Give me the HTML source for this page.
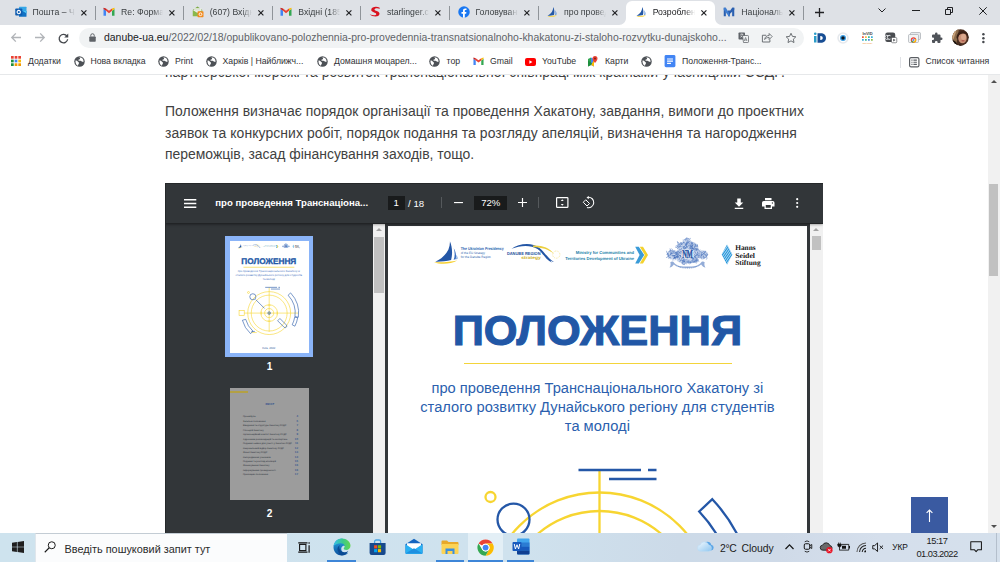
<!DOCTYPE html>
<html lang="uk">
<head>
<meta charset="utf-8">
<title>Розроблено положення</title>
<style>
*{box-sizing:border-box;margin:0;padding:0}
html,body{width:1000px;height:562px;overflow:hidden;background:#fff}
body{position:relative;font-family:"Liberation Sans","DejaVu Sans",sans-serif;color:#202124}
svg{position:absolute;overflow:visible}
/* ---------- tab strip ---------- */
#tabstrip{position:absolute;left:0;top:0;width:1000px;height:25px;background:#dee1e6}
.tab{position:absolute;top:0;height:25px;width:89px}
.tab .t{position:absolute;left:26.500px;top:6px;font-size:8.700px;line-height:12px;color:#3c4043;white-space:nowrap;width:43px;overflow:hidden;
  -webkit-mask-image:linear-gradient(90deg,#000 74%,transparent 98%);mask-image:linear-gradient(90deg,#000 74%,transparent 98%)}
.tab .x{left:74.600px;top:9.600px;width:5.800px;height:5.800px}
.tab .sep{position:absolute;left:88.500px;top:6px;width:1px;height:14px;background:#8f9499}
.tab.active{background:#fff;border-radius:6px 6px 0 0;top:.5px;height:24.500px}
.tab.active .t{top:5.500px;color:#202124}.tab.active .x{top:9.100px}
.fav{left:8.5px;top:6px;width:12px;height:12px}
.tab.active .fav{top:5.500px}
.wc{stroke:#202124;stroke-width:1;fill:none}
/* ---------- toolbar ---------- */
#toolbar{position:absolute;left:0;top:25px;width:1000px;height:25px;background:#fff}
#omni{position:absolute;left:79px;top:2.600px;width:724.500px;height:20.400px;border-radius:10.200px;background:#f1f3f4}
#url{position:absolute;left:25px;top:3.900px;font-size:10.450px;line-height:14px;color:#5f6368;white-space:nowrap}
#url b{font-weight:normal;color:#202124}
/* ---------- bookmarks ---------- */
#bookmarks{position:absolute;left:0;top:50px;width:1000px;height:24.600px;background:#fff;border-bottom:1px solid #e6e8ea}
.bm{position:absolute;top:5px;font-size:8.7px;line-height:12px;color:#303134;white-space:nowrap}
.gl{top:5.800px;width:11px;height:11px}
/* ---------- page ---------- */
#page{position:absolute;left:0;top:75px;width:988px;height:458px;background:#fff;overflow:hidden}
.ptxt{position:absolute;left:165px;font-size:13.950px;line-height:21.500px;color:#414141;white-space:nowrap;letter-spacing:.042px}
#vscroll{position:absolute;left:987.700px;top:75px;width:12.300px;height:458px;background:#f1f1f1}
#vscroll .th{position:absolute;left:1.800px;top:109px;width:9px;height:92px;background:#c1c1c1}
.arr{position:absolute;width:0;height:0;border-left:3px solid transparent;border-right:3px solid transparent}
.arr.up{border-bottom:3px solid #505050}.arr.dn{border-top:3px solid #505050}
/* ---------- pdf ---------- */
#pdf{position:absolute;left:165.300px;top:107.800px;width:657.500px;height:360px;background:#323639;overflow:hidden}
#pdfbar{position:absolute;left:0;top:0;width:658px;height:40.700px;background:#323639;box-shadow:0 1px 3px rgba(0,0,0,.55);z-index:3}
#pdfbar .ttl{position:absolute;left:50px;top:14.700px;font-size:9.62px;font-weight:bold;color:#fff;line-height:12px;white-space:nowrap}
#pdfbar .box{position:absolute;background:#191b1c;color:#fff;font-size:9.600px;line-height:14.600px;text-align:center;height:14px;top:13.500px}
#pdfbar .txt{position:absolute;color:#fff;font-size:9.600px;line-height:14px;top:13.900px;white-space:nowrap}
#pdfbar .vsep{position:absolute;top:14.500px;width:1px;height:11px;background:#55595c}
#side{position:absolute;left:0;top:41px;width:208px;height:320px;background:#323639}
#side .lbl{position:absolute;width:20px;text-align:center;color:#fff;font-size:10.200px;line-height:12px;font-weight:bold}
#sidescroll{position:absolute;left:207.400px;top:41px;width:12.300px;height:320px;background:#f1f1f1}
#sidescroll .th{position:absolute;left:1.500px;top:12.900px;width:9.400px;height:56px;background:#c1c1c1}
#viewer{position:absolute;left:219.600px;top:41px;width:425.400px;height:320px;background:#33373a}
#sheet{position:absolute;left:3px;top:2.200px;width:419.500px;height:330px;background:#fff;overflow:hidden}
#pdfscroll{position:absolute;left:644.900px;top:41px;width:12.600px;height:320px;background:#f1f1f1}
#pdfscroll .th{position:absolute;left:1.800px;top:12.400px;width:9.200px;height:13.600px;background:#c1c1c1}
#ttl{position:absolute;left:0;width:419px;text-align:center;top:78.600px;font-size:43.400px;line-height:50px;font-weight:bold;color:#2157a6;white-space:nowrap;-webkit-text-stroke:1.100px #2157a6}
.sub{position:absolute;left:0;width:419px;text-align:center;font-size:14.680px;line-height:20px;color:#2b5fae;white-space:nowrap}
#totop{position:absolute;left:911.200px;top:422.400px;width:36.600px;height:36px;background:#3a5aa1;color:#fff}
/* ---------- taskbar ---------- */
#taskbar{position:absolute;left:0;top:533px;width:1000px;height:29px;background:linear-gradient(90deg,#cee3ee 0%,#cfe2ee 52%,#ccdae8 68%,#cfdae8 78%,#d5dfec 88%,#d5e0ec 100%)}
#tbin{position:absolute;left:0;top:1px;width:1000px;height:28px}
#search{position:absolute;left:34.500px;top:-1px;width:252px;height:29px;background:#fbfcfd;border-top:1px solid #c3ccd4;border-left:1px solid #dfe6ec}
#search span{position:absolute;left:29px;top:8.500px;font-size:10.9px;line-height:13px;color:#2b2b2b;white-space:nowrap}
.tray{position:absolute;font-size:9.2px;color:#1b1b1b;white-space:nowrap;line-height:12px}
</style>
</head>
<body>
<!-- TABSTRIP -->
<div id="tabstrip">
<div class="tab" style="left:6.0px"><svg class="fav" viewBox="0 0 24 24"><rect x="8" y="1.500" width="15" height="12" rx="1" fill="#35a7e8"/><path d="M8 10h15v10.500a1 1 0 0 1-1 1H8z" fill="#1272c4"/><path d="M15.500 10h7.500v5z" fill="#50c4f4"/><rect x="0.500" y="5" width="14" height="14" rx="1.500" fill="#0f5cb0"/><circle cx="7.500" cy="12" r="3.300" fill="none" stroke="#fff" stroke-width="2.100"/></svg><div class="t">Пошта – Чер</div><svg class="x" viewBox="0 0 6 6"><path d="M.4.400l5.200 5.200M5.600.400L.4 5.600" stroke="#202124" stroke-width="1.200" fill="none"/></svg><div class="sep"></div></div>
<div class="tab" style="left:94.6px"><svg class="fav" viewBox="0 0 24 24"><path d="M1 19.500V6l5 3.700v9.800z" fill="#4285f4"/><path d="M18 19.500V9.700L23 6v13.500z" fill="#34a853"/><path d="M18 4.800L23 3.500V6l-5 3.700z" fill="#fbbc04"/><path d="M1 3.500l5 1.300v4.900L1 6z" fill="#c5221f"/><path d="M6 4.800l6 4.600 6-4.600v4.900l-6 4.600-6-4.600z" fill="#ea4335"/></svg><div class="t">Re: Формат</div><svg class="x" viewBox="0 0 6 6"><path d="M.4.400l5.200 5.200M5.600.400L.4 5.600" stroke="#202124" stroke-width="1.200" fill="none"/></svg><div class="sep"></div></div>
<div class="tab" style="left:183.2px"><svg class="fav" viewBox="0 0 24 24"><path d="M1.500 8L11 1l9.500 7z" fill="#7aa843"/><rect x="4.500" y="4.500" width="14" height="9" fill="#f4f6f0"/><path d="M6 7h11M6 9.500h11" stroke="#c9cfc0" stroke-width="1"/><path d="M1.500 8l9.500 6 9.500-6v12.500h-19z" fill="#8bb84c"/><rect x="11" y="10.500" width="12" height="12" rx="1.500" fill="#f28a1e"/><circle cx="17" cy="16.500" r="2.800" fill="none" stroke="#fff" stroke-width="1.800"/></svg><div class="t">(607) Вхідні</div><svg class="x" viewBox="0 0 6 6"><path d="M.4.400l5.200 5.200M5.600.400L.4 5.600" stroke="#202124" stroke-width="1.200" fill="none"/></svg><div class="sep"></div></div>
<div class="tab" style="left:271.8px"><svg class="fav" viewBox="0 0 24 24"><path d="M1 19.500V6l5 3.700v9.800z" fill="#4285f4"/><path d="M18 19.500V9.700L23 6v13.500z" fill="#34a853"/><path d="M18 4.800L23 3.500V6l-5 3.700z" fill="#fbbc04"/><path d="M1 3.500l5 1.300v4.900L1 6z" fill="#c5221f"/><path d="M6 4.800l6 4.600 6-4.600v4.900l-6 4.600-6-4.600z" fill="#ea4335"/></svg><div class="t">Вхідні (185)</div><svg class="x" viewBox="0 0 6 6"><path d="M.4.400l5.200 5.200M5.600.400L.4 5.600" stroke="#202124" stroke-width="1.200" fill="none"/></svg><div class="sep"></div></div>
<div class="tab" style="left:360.4px"><svg class="fav" viewBox="0 0 24 24"><path d="M21.500 3.500C16 0.500 5 1 4.500 7.500 4 13 15 12.500 14.500 16.500 14 19.500 7 19 1.500 16.500c5 5.500 18.500 6.500 19.500-.5C22 9.500 10.500 10.500 11 7 11.500 4 17.500 3.500 21.500 5.500z" fill="#d9121f"/></svg><div class="t">starlinger.co</div><svg class="x" viewBox="0 0 6 6"><path d="M.4.400l5.200 5.200M5.600.400L.4 5.600" stroke="#202124" stroke-width="1.200" fill="none"/></svg><div class="sep"></div></div>
<div class="tab" style="left:449.0px"><svg class="fav" viewBox="0 0 24 24"><circle cx="12" cy="12" r="11.500" fill="#1877f2"/><path d="M16.300 15.300l.5-3.300h-3.200V9.800c0-.9.400-1.800 1.900-1.800H17V5.200s-1.300-.2-2.600-.2c-2.700 0-4.400 1.600-4.400 4.500V12H7v3.300h3v8.100c1.200.2 2.400.2 3.600 0v-8.100z" fill="#fff"/></svg><div class="t">Головуванн</div><svg class="x" viewBox="0 0 6 6"><path d="M.4.400l5.200 5.200M5.600.400L.4 5.600" stroke="#202124" stroke-width="1.200" fill="none"/></svg><div class="sep"></div></div>
<div class="tab" style="left:537.6px"><svg class="fav" viewBox="0 0 24 24"><path d="M14.500 2C14.500 9 11 15.500 3 19.500c5.500 0 10-.5 13-1.500C17.500 12 16.800 6.500 14.500 2z" fill="#2458a6"/><path d="M18 8.500c1.400 3.500 1.400 7 .2 9.800l2.600-.7C21.500 14.300 20.300 11 18 8.500z" fill="#4a86d6"/><path d="M2.500 20c6 2.600 14 2.400 19.500-1.300-6 1.400-13 1.800-19.500 1.300z" fill="#f6cf2f"/></svg><div class="t">про провед</div><svg class="x" viewBox="0 0 6 6"><path d="M.4.400l5.200 5.200M5.600.400L.4 5.600" stroke="#202124" stroke-width="1.200" fill="none"/></svg></div>
<div class="tab active" style="left:626.2px"><svg class="fav" viewBox="0 0 24 24"><path d="M14.500 2C14.500 9 11 15.500 3 19.500c5.500 0 10-.5 13-1.500C17.500 12 16.800 6.500 14.500 2z" fill="#2458a6"/><path d="M18 8.500c1.400 3.500 1.400 7 .2 9.800l2.600-.7C21.500 14.300 20.300 11 18 8.500z" fill="#4a86d6"/><path d="M2.500 20c6 2.600 14 2.400 19.500-1.300-6 1.400-13 1.800-19.500 1.300z" fill="#f6cf2f"/></svg><div class="t">Розроблено</div><svg class="x" viewBox="0 0 6 6"><path d="M.4.400l5.200 5.200M5.600.400L.4 5.600" stroke="#202124" stroke-width="1.200" fill="none"/></svg></div>
<div class="tab" style="left:714.8px"><svg class="fav" viewBox="0 0 24 24"><path d="M1.500 3.500h4.200v17H1.500zM10 9h4v11.500h-4zM18.300 3.500h4.200v17h-4.200z" fill="#2a5fb0"/><path d="M1.500 3.500h4.200L14 17v3.500h-2.500L1.500 7.500z" fill="#3f7dd0"/><path d="M22.500 3.500h-4.200L12 12.500v5l10.500-10z" fill="#2a5fb0"/></svg><div class="t">Національн</div><svg class="x" viewBox="0 0 6 6"><path d="M.4.400l5.200 5.200M5.600.400L.4 5.600" stroke="#202124" stroke-width="1.200" fill="none"/></svg><div class="sep"></div></div>
<svg style="left:619.200px;top:18px;width:7px;height:7px" viewBox="0 0 6 6"><path d="M0 6h6V0C6 3.300 3.300 6 0 6z" fill="#fff"/></svg>
<svg style="left:715.200px;top:18px;width:7px;height:7px" viewBox="0 0 6 6"><path d="M6 6H0V0c0 3.300 2.700 6 6 6z" fill="#fff"/></svg>
<svg style="left:814.500px;top:7.500px;width:9px;height:9px" viewBox="0 0 9 9"><path d="M4.500 0v9M0 4.500h9" stroke="#202124" stroke-width="1.300" fill="none"/></svg>
<svg style="left:878px;top:8px;width:8px;height:5px" viewBox="0 0 8 5"><path class="wc" d="M.5.500L4 4l3.500-3.500"/></svg>
<svg style="left:912px;top:10px;width:8px;height:1px" viewBox="0 0 8 1"><path class="wc" d="M0 .5h8"/></svg>
<svg style="left:945px;top:6.500px;width:8px;height:8px" viewBox="0 0 8 8"><path class="wc" d="M.5 2.500h5v5h-5zM2.500 2.500v-2h5v5h-2"/></svg>
<svg style="left:979px;top:6.500px;width:8px;height:8px" viewBox="0 0 8 8"><path class="wc" d="M.3.300l7.400 7.400M7.700.300L.3 7.700"/></svg>
</div>

<!-- TOOLBAR -->
<div id="toolbar">
<svg style="left:11px;top:8px;width:10px;height:9px" viewBox="0 0 10 9"><path d="M10 4.500H1M4.800.400L.8 4.500l4 4.100" stroke="#b1b4b8" stroke-width="1.350" fill="none"/></svg>
<svg style="left:34.500px;top:8px;width:10px;height:9px" viewBox="0 0 10 9"><path d="M0 4.500h9M5.200.400l4 4.100-4 4.100" stroke="#b1b4b8" stroke-width="1.350" fill="none"/></svg>
<svg style="left:57.500px;top:7.500px;width:11px;height:11px" viewBox="0 0 22 22"><path d="M18 6.500A8.500 8.500 0 1 0 19.300 12.500" stroke="#46494e" stroke-width="2.600" fill="none"/><path d="M20.500 1v8h-8z" fill="#46494e"/></svg>
<div id="omni">
<svg style="left:9.800px;top:5.300px;width:7px;height:9px" viewBox="0 0 14 18"><rect x="0.500" y="7" width="13" height="10.500" rx="1.500" fill="#5f6368"/><path d="M3.500 7V5a3.500 3.500 0 0 1 7 0v2" fill="none" stroke="#5f6368" stroke-width="2"/></svg>
<div id="url"><b>danube-ua.eu</b>/2022/02/18/opublikovano-polozhennia-pro-provedennia-transnatsionalnoho-khakatonu-zi-staloho-rozvytku-dunajskoho...</div>
<!-- translate -->
<svg style="left:659px;top:4.900px;width:11px;height:11px" viewBox="0 0 22 22"><rect x="1" y="1" width="13" height="14" rx="1.500" fill="#5f6368"/><path d="M4.500 4.500h6M7.500 3v1.500M9.500 4.500c-.5 3-2.500 5-5 6M5.500 7c1 1.500 2.500 3 4.500 3.500" stroke="#fff" stroke-width="1.200" fill="none"/><path d="M9 7h10.500a1.500 1.500 0 0 1 1.500 1.500V19.500a1.500 1.500 0 0 1-1.500 1.500H11z" fill="#f1f3f4" stroke="#5f6368" stroke-width="1.500"/><path d="M12.500 18l2.700-7 2.700 7M13.500 16h3.500" stroke="#5f6368" stroke-width="1.300" fill="none"/></svg>
<!-- share -->
<svg style="left:682px;top:4.700px;width:11.800px;height:11px" viewBox="0 0 23 22"><path d="M10 6.500H2.500V20h15v-5" stroke="#5f6368" stroke-width="1.800" fill="none"/><path d="M7 15c.5-5 4-8 9-8V3l6 6-6 6v-4c-4 0-7 1-9 4z" stroke="#5f6368" stroke-width="1.700" fill="none" stroke-linejoin="round"/></svg>
<!-- star -->
<svg style="left:705.500px;top:4.200px;width:12px;height:12px" viewBox="0 0 24 24"><path d="M12 2.500l2.900 6.300 6.800.8-5 4.700 1.300 6.800-6-3.400-6 3.400 1.300-6.800-5-4.700 6.800-.8z" stroke="#5f6368" stroke-width="1.800" fill="none" stroke-linejoin="round"/></svg>
</div>
<!-- extension icons -->
<svg style="left:813.500px;top:7px;width:12px;height:11px" viewBox="0 0 24 22"><rect x="0" y="8" width="5" height="13" fill="#2a9cc8"/><circle cx="2.500" cy="3.500" r="2.600" fill="#2a9cc8"/><path d="M7 2.500h6.500c6.500 0 10.500 3.800 10.500 9.500s-4 9.500-10.500 9.500H7zM12.500 8v8h.8c2.600 0 4.200-1.400 4.200-4s-1.600-4-4.200-4z" fill="#184e94"/></svg>
<svg style="left:836.500px;top:6.500px;width:12px;height:12px" viewBox="0 0 24 24"><circle cx="12" cy="12" r="11.500" fill="#e6e9ed"/><circle cx="12" cy="12" r="8.300" fill="#fff"/><circle cx="12" cy="12" r="6" fill="#3a9fe6"/><circle cx="12" cy="12" r="3.500" fill="#10161f"/></svg>
<svg style="left:860.500px;top:6px;width:13px;height:13px" viewBox="0 0 26 26"><text x="13" y="7.500" font-size="8" font-weight="bold" text-anchor="middle" fill="#444" font-family="Liberation Sans, sans-serif">InVID</text><rect x="2" y="10.5" width="3.500" height="3.500" fill="#e9573f"/><rect x="8" y="10.5" width="3.500" height="3.500" fill="#f6bb42"/><rect x="14" y="10.5" width="3.500" height="3.500" fill="#37bc9b"/><rect x="20" y="10.5" width="3.500" height="3.500" fill="#3bafda"/><rect x="2" y="16.0" width="3.500" height="3.500" fill="#3bafda"/><rect x="8" y="16.0" width="3.500" height="3.500" fill="#37bc9b"/><rect x="14" y="16.0" width="3.500" height="3.500" fill="#4a89dc"/><rect x="20" y="16.0" width="3.500" height="3.500" fill="#8cc152"/><text x="13" y="25.500" font-size="5" text-anchor="middle" fill="#f08a24" font-family="Liberation Sans, sans-serif">WeVerify</text></svg>
<svg style="left:884.500px;top:7px;width:12px;height:11px" viewBox="0 0 24 22"><rect x="0.500" y="1" width="20" height="19" rx="4.500" fill="#4a4d51"/><path d="M6 7.500a4 4 0 1 0 0 6.500M11 7.500a4 4 0 1 0 0 6.500" stroke="#e8eaed" stroke-width="2" fill="none"/><rect x="13" y="11" width="10.500" height="10.500" rx="2" fill="#fff" stroke="#4a4d51" stroke-width="1.200"/><path d="M16.500 13.500l4.500 2.700-4.500 2.700z" fill="#4a4d51"/></svg>
<svg style="left:907.500px;top:6.500px;width:13px;height:12px" viewBox="0 0 26 24"><rect x="5" y="1" width="20" height="14" rx="2" fill="#e8eaed" stroke="#9aa0a6" stroke-width="1.200"/><rect x="1" y="5" width="20" height="16" rx="2" fill="#f1f3f4" stroke="#9aa0a6" stroke-width="1.200"/><circle cx="11" cy="16" r="5.500" fill="#ea4335"/><path d="M11 16l-4.800 2.700A5.500 5.500 0 0 0 11 21.500z" fill="#34a853"/><path d="M11 16v5.500a5.500 5.500 0 0 0 4.800-8.200z" fill="#fbbc04"/><circle cx="11" cy="16" r="2.400" fill="#4285f4" stroke="#fff" stroke-width="1"/></svg>
<svg style="left:931px;top:7px;width:12px;height:12px" viewBox="0 0 24 24"><path d="M20.500 11H19V7a2 2 0 0 0-2-2h-4V3.500a2.500 2.500 0 0 0-5 0V5H4a2 2 0 0 0-2 2v3.800h1.500a2.700 2.700 0 0 1 0 5.400H2V20a2 2 0 0 0 2 2h3.800v-1.500a2.700 2.700 0 0 1 5.400 0V22H17a2 2 0 0 0 2-2v-4h1.500a2.500 2.500 0 0 0 0-5z" fill="#50545a"/></svg>
<!-- avatar -->
<svg style="left:951.500px;top:4px;width:17px;height:17px" viewBox="0 0 34 34"><defs><clipPath id="avc"><circle cx="17" cy="17" r="16.500"/></clipPath></defs><g clip-path="url(#avc)"><rect width="34" height="34" fill="#4a2e20"/><path d="M0 0h14L8 34H0z" fill="#8a6a4a"/><path d="M0 0h10L3 20H0z" fill="#c9a27a"/><ellipse cx="21" cy="18" rx="8.500" ry="10.500" fill="#c98f74"/><ellipse cx="23" cy="16" rx="5" ry="6" fill="#dba98e"/><path d="M9 18C9 6 20 1 30 7c3 3 4 8 3 13-1-7-5-11-11-11-6 0-10 4-11 12z" fill="#3a2116"/><ellipse cx="22" cy="23.500" rx="3.300" ry="1.500" fill="#b0584f"/><path d="M0 22c5 0 9 4 12 12H0z" fill="#17120f"/><path d="M14 30c4 3 12 3 16-1v5H14z" fill="#2a1b14"/></g></svg>
<svg style="left:982.400px;top:8.200px;width:2.800px;height:10.400px" viewBox="0 0 5.600 20.800"><circle cx="2.800" cy="2.600" r="2.500" fill="#46494e"/><circle cx="2.800" cy="10.400" r="2.500" fill="#46494e"/><circle cx="2.800" cy="18.200" r="2.500" fill="#46494e"/></svg>
</div>

<!-- BOOKMARKS -->
<div id="bookmarks">
<svg style="left:10.900px;top:6px;width:10px;height:10px" viewBox="0 0 20 20"><rect x="0.0" y="0.0" width="5.400" height="5.400" fill="#e94235"/><rect x="7.3" y="0.0" width="5.400" height="5.400" fill="#e94235"/><rect x="14.6" y="0.0" width="5.400" height="5.400" fill="#e94235"/><rect x="0.0" y="7.3" width="5.400" height="5.400" fill="#1e8e3e"/><rect x="7.3" y="7.3" width="5.400" height="5.400" fill="#4285f4"/><rect x="14.6" y="7.3" width="5.400" height="5.400" fill="#fbbc04"/><rect x="0.0" y="14.6" width="5.400" height="5.400" fill="#1e8e3e"/><rect x="7.3" y="14.6" width="5.400" height="5.400" fill="#f29900"/><rect x="14.6" y="14.6" width="5.400" height="5.400" fill="#f29900"/></svg>
<div class="bm" style="left:28px">Додатки</div>
<svg class="gl" style="left:73.5px" viewBox="0 0 22 22"><circle cx="11" cy="11" r="10.500" fill="#4d5156"/><path d="M3 9c2-.5 3.500.5 4.500 2s2.500 1.500 2.500 3-1.500 2-1.500 4l-1 1.500C4.500 18 2.500 14 3 9zM9.500 2.500c2 .5 3 1.500 2.500 3s-2.500 1-3 2.500 1.500 2 3 1.500 2.500.5 3.500 1.500 2.500 0 3.500 1c.5-3.500-1-7-4-8.500-1.500-.8-3.500-1.200-5.500-1z" fill="#fff"/></svg>
<div class="bm" style="left:90.5px">Нова вкладка</div>
<svg class="gl" style="left:158px" viewBox="0 0 22 22"><circle cx="11" cy="11" r="10.500" fill="#4d5156"/><path d="M3 9c2-.5 3.500.5 4.500 2s2.500 1.500 2.500 3-1.500 2-1.500 4l-1 1.500C4.500 18 2.500 14 3 9zM9.500 2.500c2 .5 3 1.500 2.500 3s-2.500 1-3 2.500 1.500 2 3 1.500 2.500.5 3.500 1.500 2.500 0 3.500 1c.5-3.500-1-7-4-8.500-1.500-.8-3.500-1.200-5.500-1z" fill="#fff"/></svg>
<div class="bm" style="left:175px">Print</div>
<svg class="gl" style="left:205.5px" viewBox="0 0 22 22"><circle cx="11" cy="11" r="10.500" fill="#4d5156"/><path d="M3 9c2-.5 3.500.5 4.500 2s2.500 1.500 2.500 3-1.500 2-1.500 4l-1 1.500C4.500 18 2.500 14 3 9zM9.500 2.500c2 .5 3 1.500 2.500 3s-2.500 1-3 2.500 1.500 2 3 1.500 2.500.5 3.500 1.500 2.500 0 3.500 1c.5-3.500-1-7-4-8.500-1.500-.8-3.500-1.200-5.500-1z" fill="#fff"/></svg>
<div class="bm" style="left:222.5px">Харків | Найближч...</div>
<svg class="gl" style="left:316.5px" viewBox="0 0 22 22"><circle cx="11" cy="11" r="10.500" fill="#4d5156"/><path d="M3 9c2-.5 3.500.5 4.500 2s2.500 1.500 2.500 3-1.500 2-1.500 4l-1 1.500C4.500 18 2.500 14 3 9zM9.500 2.500c2 .5 3 1.500 2.500 3s-2.500 1-3 2.500 1.500 2 3 1.500 2.500.5 3.500 1.500 2.500 0 3.500 1c.5-3.500-1-7-4-8.500-1.500-.8-3.500-1.200-5.500-1z" fill="#fff"/></svg>
<div class="bm" style="left:334px">Домашня моцарел...</div>
<svg class="gl" style="left:428.5px" viewBox="0 0 22 22"><circle cx="11" cy="11" r="10.500" fill="#4d5156"/><path d="M3 9c2-.5 3.500.5 4.500 2s2.500 1.500 2.500 3-1.500 2-1.500 4l-1 1.500C4.500 18 2.500 14 3 9zM9.500 2.500c2 .5 3 1.500 2.500 3s-2.500 1-3 2.500 1.500 2 3 1.500 2.500.5 3.500 1.500 2.500 0 3.500 1c.5-3.500-1-7-4-8.500-1.500-.8-3.500-1.200-5.500-1z" fill="#fff"/></svg>
<div class="bm" style="left:446.5px">тор</div>
<svg class="gl" style="left:472.500px" viewBox="0 0 24 24"><path d="M1 19.500V6l5 3.700v9.800z" fill="#4285f4"/><path d="M18 19.500V9.700L23 6v13.500z" fill="#34a853"/><path d="M18 4.800L23 3.500V6l-5 3.700z" fill="#fbbc04"/><path d="M1 3.500l5 1.300v4.900L1 6z" fill="#c5221f"/><path d="M6 4.800l6 4.600 6-4.600v4.900l-6 4.600-6-4.600z" fill="#ea4335"/></svg>
<div class="bm" style="left:490px">Gmail</div>
<svg style="left:524.500px;top:8px;width:11px;height:8px" viewBox="0 0 22 16"><rect width="22" height="16" rx="4" fill="#f00"/><path d="M8.800 4.500l6 3.500-6 3.500z" fill="#fff"/></svg>
<div class="bm" style="left:542px">YouTube</div>
<svg style="left:587px;top:5.500px;width:11px;height:12px" viewBox="0 0 22 24"><path d="M2 6l6-3v15l-6 3z" fill="#34a853"/><path d="M8 3l6 3v15l-6-3z" fill="#4285f4"/><path d="M8 18l6-10v13z" fill="#fbbc04"/><path d="M2 21l6-3 2-3.500L2 9z" fill="#1e8e3e"/><path d="M16 0a5 5 0 0 0-5 5c0 3.500 5 9 5 9s5-5.500 5-9a5 5 0 0 0-5-5z" fill="#ea4335"/><circle cx="16" cy="5" r="1.800" fill="#7b1a12"/></svg>
<div class="bm" style="left:605px">Карти</div>
<svg class="gl" style="left:640.5px" viewBox="0 0 22 22"><circle cx="11" cy="11" r="10.500" fill="#4d5156"/><path d="M3 9c2-.5 3.500.5 4.500 2s2.500 1.500 2.500 3-1.500 2-1.500 4l-1 1.500C4.500 18 2.500 14 3 9zM9.500 2.500c2 .5 3 1.500 2.500 3s-2.500 1-3 2.500 1.500 2 3 1.500 2.500.5 3.500 1.500 2.500 0 3.500 1c.5-3.500-1-7-4-8.500-1.500-.8-3.500-1.200-5.500-1z" fill="#fff"/></svg>
<svg style="left:663.700px;top:5.300px;width:12px;height:12.300px" viewBox="0 0 22 25"><rect width="22" height="25" rx="3" fill="#4285f4"/><path d="M5 8h12M5 12.500h12M5 17h8" stroke="#fff" stroke-width="2.200"/></svg>
<div class="bm" style="left:682px">Положення-Транс...</div>
<div style="position:absolute;left:900px;top:6.500px;width:1px;height:11px;background:#dfe1e5"></div>
<svg style="left:909px;top:6.500px;width:10.500px;height:10.500px" viewBox="0 0 21 21"><rect x="1.200" y="1.200" width="18.600" height="18.600" rx="3" fill="none" stroke="#5a5e63" stroke-width="2.400"/><path d="M8.800 6.300h7M8.800 10.500h7M8.800 14.700h7" stroke="#5a5e63" stroke-width="2.200"/><path d="M4.800 6.300h2.200M4.800 10.500h2.200M4.800 14.700h2.200" stroke="#5a5e63" stroke-width="2.200"/></svg>
<div class="bm" style="left:925.5px">Список читання</div>
</div>

<!-- PAGE -->
<div id="page">
<div class="ptxt" style="top:-12.800px;letter-spacing:.07px">партнерської мережі та розвиток транснаціональної співпраці між країнами-учасницями ЄСДР.</div>
<div class="ptxt" style="top:26.200px">Положення визначає порядок організації та проведення Хакатону, завдання, вимоги до проектних</div>
<div class="ptxt" style="top:47.700px;letter-spacing:.075px">заявок та конкурсних робіт, порядок подання та розгляду апеляцій, визначення та нагородження</div>
<div class="ptxt" style="top:69.200px;letter-spacing:-.008px">переможців, засад фінансування заходів, тощо.</div>
<div id="pdf">
<div style="position:absolute;left:0;top:0;width:658px;height:1px;background:#25282a;z-index:5"></div><div style="position:absolute;left:0;top:0;width:1px;height:360px;background:#25282a;z-index:5"></div>
<div id="pdfbar">
<svg style="left:19.200px;top:16px;width:12.300px;height:9px" viewBox="0 0 12.500 9"><path d="M0 .8h12.500M0 4.500h12.500M0 8.200h12.500" stroke="#fff" stroke-width="1.500"/></svg>
<div class="ttl">про проведення Транснаціона...</div>
<div class="box" style="left:222.300px;width:17.300px">1</div>
<div class="txt" style="left:242.800px">/ 18</div>
<div class="vsep" style="left:276px"></div>
<svg style="left:288.300px;top:19.700px;width:9px;height:1.150px" viewBox="0 0 9 1.150"><rect width="9" height="1.150" fill="#fff"/></svg>
<div class="box" style="left:309px;width:33px">72%</div>
<svg style="left:353px;top:15.500px;width:9px;height:9px" viewBox="0 0 9 9"><path d="M4.500 0v9M0 4.500h9" stroke="#fff" stroke-width="1.150"/></svg>
<div class="vsep" style="left:373px"></div>
<svg style="left:390.500px;top:14.500px;width:12.500px;height:11px" viewBox="0 0 25 22"><rect x="1.200" y="1.200" width="22.600" height="19.600" rx="1.500" fill="none" stroke="#fff" stroke-width="2.400"/><path d="M12.500 4.500l3 3.500h-6zM12.500 17.500l3-3.500h-6z" fill="#fff"/></svg>
<svg style="left:416px;top:13.500px;width:13px;height:13px" viewBox="0 0 26 26"><path d="M9.500 7.500l7.500 7.500-5 5-7.500-7.500z" fill="none" stroke="#fff" stroke-width="2"/><path d="M14 2.500a10.500 10.500 0 1 1-2 20.500" fill="none" stroke="#fff" stroke-width="2.200"/><path d="M15.500 0v6.500L11 3z" fill="#fff"/></svg>
<svg style="left:569px;top:15px;width:10px;height:11px" viewBox="0 0 20 22"><path d="M6.500 1h7v8h5L10 17.500 1.500 9h5z" fill="#fff"/><rect x="1.500" y="19.500" width="17" height="2.500" fill="#fff"/></svg>
<svg style="left:597px;top:15px;width:12.500px;height:11px" viewBox="0 0 25 22"><rect x="6" y="0" width="13" height="4.500" fill="#fff"/><path d="M3.500 6h18A3.500 3.500 0 0 1 25 9.500V17h-5v5H5v-5H0V9.500A3.500 3.500 0 0 1 3.500 6zM7.500 14v5.500h10V14z" fill="#fff" fill-rule="evenodd"/><circle cx="20.800" cy="10" r="1.300" fill="#323639"/></svg>
<svg style="left:631px;top:15.500px;width:2.400px;height:10px" viewBox="0 0 4.800 20"><circle cx="2.400" cy="2.400" r="2.200" fill="#fff"/><circle cx="2.400" cy="10" r="2.200" fill="#fff"/><circle cx="2.400" cy="17.600" r="2.200" fill="#fff"/></svg>
</div>
<div id="side">
<div style="position:absolute;left:60px;top:12.300px;width:87.800px;height:120.700px;background:#8ab4f8"></div>
<div id="th1" style="position:absolute;left:64.400px;top:16.800px;width:79.300px;height:112.300px;background:#fff;overflow:hidden">
<svg style="left:-.3px;top:.4px;width:79.600px;height:112.650px" viewBox="0 0 419 593" font-family="Liberation Sans, sans-serif" text-rendering="geometricPrecision"><path d="M61.900 15.300C62.300 23 58 30.500 47.300 35.800c5.500.2 11-.5 15.800-1.700C64.800 27.500 64.200 20.500 61.900 15.300z" fill="#2356a6"/><path d="M65.700 22.300c1.300 4 1.300 8-.1 11.500l2.100-.5C68.600 29.500 67.800 25.500 65.700 22.300z" fill="#3a6fc0"/><path d="M67.900 28.800c.8 1.800.8 3.300.2 4.500l1.300-.4C69.800 31.300 69.200 30 67.900 28.800z" fill="#5a8fd6"/><path d="M46 36.200c7 2.600 16.500 2 23.300-1.600-7 1.500-15 2-23.300 1.600z" fill="#f6d02f"/><text x="72.700" y="24.200" font-size="4.100" font-weight="bold" fill="#2b5fae" textLength="43" lengthAdjust="spacingAndGlyphs">The Ukrainian Presidency</text><text x="72.700" y="28.200" font-size="3.200" fill="#2b5fae" textLength="24.300" lengthAdjust="spacingAndGlyphs">of the EU Strategy</text><text x="72.700" y="32.200" font-size="3.200" fill="#2b5fae" textLength="30.100" lengthAdjust="spacingAndGlyphs">for the Danube Region</text><path d="M123.500 22.800C131 17.300 144 16 151.500 22c5 4 8 10 14.500 14-1.500-.2-2.600-.7-3.600-1.400.3.900.8 1.500 1.500 2.100C157 33 155 27 149.500 23 142.500 18.500 132 19.300 123.500 22.800z" fill="#2356a6"/><path d="M144.500 19.600c8.500-.8 17 2 21.500 8.200-5.500-4.500-13-6.600-20.500-6.500z" fill="#ecd040"/><circle cx="168.300" cy="28.600" r="3.600" fill="none" stroke="#ecd040" stroke-width=".55" stroke-dasharray=".8 .9"/><text x="118.900" y="28.800" font-size="4.300" font-weight="bold" fill="#1d4f9c" textLength="33.600" lengthAdjust="spacingAndGlyphs">DANUBE REGION</text><text x="133.300" y="32.900" font-size="4.300" font-weight="bold" fill="#cdb02a" textLength="19.600" lengthAdjust="spacingAndGlyphs">strategy</text><text x="246" y="28.200" font-size="4.250" font-weight="bold" fill="#1d7fa9" text-anchor="end" textLength="58.300" lengthAdjust="spacingAndGlyphs">Ministry for Communities and</text><text x="246" y="33.700" font-size="4.250" font-weight="bold" fill="#1d7fa9" text-anchor="end" textLength="68.800" lengthAdjust="spacingAndGlyphs">Territories Development of Ukraine</text><path d="M247.200 20.700h3.600l5.400 8.400-5.400 8.400h-3.600l4.400-8.400z" fill="#3a9bd8"/><path d="M251.800 20.700h3.200l5 8.400-5 8.400h-3.200l5-8.400z" fill="#f4d22e"/><g transform="translate(1.300 0)"><g fill="#4a78c2" opacity=".55"><ellipse cx="298.2" cy="17" rx="4" ry="5"/><ellipse cx="298.2" cy="21" rx="11" ry="6"/><ellipse cx="298.2" cy="28.5" rx="13" ry="6.5"/><ellipse cx="284" cy="28.5" rx="6.5" ry="4.2"/><ellipse cx="312.4" cy="28.5" rx="6.5" ry="4.2"/><ellipse cx="298.2" cy="34" rx="11" ry="3.5"/></g><text x="298.200" y="32" font-size="11.800" font-weight="bold" fill="#2451a2" stroke="#2451a2" stroke-width=".45" text-anchor="middle" font-family="Liberation Serif, serif" textLength="10.600" lengthAdjust="spacingAndGlyphs">NM</text></g><clipPath id="hssa"><path d="M333.600 28.600L339 18.400l5.400 10.200L339 38.800z"/></clipPath><g clip-path="url(#hssa)" stroke="#1f93da" stroke-width="1.100"><path d="M326.00 16l12 22.700"/><path d="M327.75 16l12 22.700"/><path d="M329.50 16l12 22.700"/><path d="M331.25 16l12 22.700"/><path d="M333.00 16l12 22.700"/><path d="M334.75 16l12 22.700"/><path d="M336.50 16l12 22.700"/><path d="M338.25 16l12 22.700"/><path d="M340.00 16l12 22.700"/><path d="M341.75 16l12 22.700"/><path d="M343.50 16l12 22.700"/><path d="M345.25 16l12 22.700"/></g><g font-family="Liberation Serif, serif" font-weight="bold" font-size="7.300" fill="#161616"><text x="347.200" y="23.900" textLength="20.400" lengthAdjust="spacingAndGlyphs">Hanns</text><text x="347.200" y="31.500" textLength="19.800" lengthAdjust="spacingAndGlyphs">Seidel</text><text x="347.200" y="39.100" textLength="25.400" lengthAdjust="spacingAndGlyphs">Stiftung</text></g>
<text x="209.500" y="119" font-size="43.400" font-weight="bold" fill="#2157a6" stroke="#2157a6" stroke-width="1.600" text-anchor="middle">ПОЛОЖЕННЯ</text>
<rect x="76" y="136" width="268" height="3.500" fill="#f3d43a"/>
<g font-size="14.500" fill="#3f6fbe" text-anchor="middle"><text x="209.500" y="164">про проведення Транснаціонального Хакатону зі</text><text x="209.500" y="184">сталого розвитку Дунайського регіону для студентів</text><text x="209.500" y="204">та молоді</text><text x="209.500" y="566" fill="#41649f">Київ, 2022</text></g>
<g fill="none" stroke-width="3.200"><g stroke="#f7d531"><circle cx="211.5" cy="379.5" r="113"/><circle cx="211.5" cy="379.5" r="94.500"/><circle cx="211.5" cy="379.5" r="44"/><circle cx="211.5" cy="379.5" r="24"/><path d="M211.5 244V478M80 379.5H364"/><rect x="53" y="366" width="27" height="27"/><circle cx="102.500" cy="271" r="5"/><path d="M170 371.5v16M253 371.5v16M203.5 338h16M203.5 421h16M118 482h28"/></g><g stroke="#2457a7"><circle cx="125.500" cy="293.600" r="16"/><path d="M140.500 308.500l46.500 46.500"/><path d="M190.500 244h62.500M260 244h8.500M221 253h47.500"/><path d="M324.3 273.2A155 155 0 0 1 365.0 401.1L347.2 398.6A137 137 0 0 0 311.2 285.5Z"/><path d="M361.6 403.3A152 152 0 0 1 346.9 448.5L332.7 441.2A136 136 0 0 0 345.8 400.8Z"/><path d="M113.8 488.0A146 146 0 0 1 70.5 417.3L87.9 412.6A128 128 0 0 0 125.9 474.6Z"/><path d="M256 420l34 34a8.500 8.500 0 0 0 12-12l-34-34z"/><path d="M118 476h18"/><circle cx="211.5" cy="379.5" r="7"/></g><circle cx="211.5" cy="379.5" r="3" fill="#2457a7" stroke="none"/></g>
</svg></div>
<div class="lbl" style="left:94.200px;top:137px">1</div>
<div id="th2" style="position:absolute;left:64.800px;top:164.300px;width:78.800px;height:111.700px;background:#9c9c9c;overflow:hidden">
<div style="position:absolute;left:0;top:2.800px;width:18.200px;height:1.800px;background:#b3a044"></div>
<svg style="left:0;top:0;width:79.500px;height:111.700px" viewBox="0 0 318 446.800" font-family="Liberation Sans, sans-serif" font-weight="bold" text-rendering="geometricPrecision">
<text x="159" y="68" font-size="11" fill="#2f4f8c" text-anchor="middle" letter-spacing=".5">ЗМІСТ</text>
<text x="52" y="117.0" font-size="9" fill="#474b52">Преамбула</text><text x="272" y="117.0" font-size="11.500" fill="#34568f" text-anchor="end">4</text>
<text x="52" y="134.9" font-size="9" fill="#474b52">Загальні положення</text><text x="272" y="134.9" font-size="11.500" fill="#34568f" text-anchor="end">5</text>
<text x="52" y="152.8" font-size="9" fill="#474b52">Введення та структура Хакатону РСДР</text><text x="272" y="152.8" font-size="11.500" fill="#34568f" text-anchor="end">7</text>
<text x="52" y="170.7" font-size="9" fill="#474b52">Глосарій Хакатону</text><text x="272" y="170.7" font-size="11.500" fill="#34568f" text-anchor="end">8</text>
<text x="52" y="188.6" font-size="9" fill="#474b52">Організаційний комітет Хакатону РСДР</text><text x="272" y="188.6" font-size="11.500" fill="#34568f" text-anchor="end">9</text>
<text x="52" y="206.5" font-size="9" fill="#474b52">Адресники рекомендацій та експертиза</text><text x="272" y="206.5" font-size="11.500" fill="#34568f" text-anchor="end">10</text>
<text x="52" y="224.4" font-size="9" fill="#474b52">Подання заявок для участі у Хакатоні РСДР</text><text x="272" y="224.4" font-size="11.500" fill="#34568f" text-anchor="end">11</text>
<text x="52" y="242.3" font-size="9" fill="#474b52">Національний відбір Хакатону РСДР</text><text x="272" y="242.3" font-size="11.500" fill="#34568f" text-anchor="end">12</text>
<text x="52" y="260.2" font-size="9" fill="#474b52">Фінал Хакатону РСДР</text><text x="272" y="260.2" font-size="11.500" fill="#34568f" text-anchor="end">13</text>
<text x="52" y="278.1" font-size="9" fill="#474b52">Нагородження учасників</text><text x="272" y="278.1" font-size="11.500" fill="#34568f" text-anchor="end">14</text>
<text x="52" y="296.0" font-size="9" fill="#474b52">Подання та розгляд апеляцій</text><text x="272" y="296.0" font-size="11.500" fill="#34568f" text-anchor="end">15</text>
<text x="52" y="313.9" font-size="9" fill="#474b52">Фінансування Хакатону</text><text x="272" y="313.9" font-size="11.500" fill="#34568f" text-anchor="end">16</text>
<text x="52" y="331.8" font-size="9" fill="#474b52">Інформування громадськості</text><text x="272" y="331.8" font-size="11.500" fill="#34568f" text-anchor="end">16</text>
<text x="52" y="349.7" font-size="9" fill="#474b52">Прикінцеві положення</text><text x="272" y="349.7" font-size="11.500" fill="#34568f" text-anchor="end">17</text>
</svg>
</div>
<div class="lbl" style="left:94.200px;top:284.300px">2</div>
</div>
<div id="sidescroll"><div class="arr up" style="left:3.200px;top:4.500px;border-bottom-color:#a3a3a3"></div><div class="th"></div></div>
<div id="viewer"><div id="sheet">
<svg style="left:0;top:0;width:419px;height:330px" viewBox="0 0 419 330" font-family="Liberation Sans, sans-serif" text-rendering="geometricPrecision"><path d="M61.900 15.300C62.300 23 58 30.500 47.300 35.800c5.500.2 11-.5 15.800-1.700C64.800 27.500 64.200 20.500 61.900 15.300z" fill="#2356a6"/><path d="M65.700 22.300c1.300 4 1.300 8-.1 11.500l2.100-.5C68.600 29.500 67.800 25.500 65.700 22.300z" fill="#3a6fc0"/><path d="M67.900 28.800c.8 1.800.8 3.300.2 4.500l1.300-.4C69.800 31.300 69.200 30 67.900 28.800z" fill="#5a8fd6"/><path d="M46 36.200c7 2.600 16.500 2 23.300-1.600-7 1.500-15 2-23.300 1.600z" fill="#f6d02f"/><text x="72.700" y="24.200" font-size="4.100" font-weight="bold" fill="#2b5fae" textLength="43" lengthAdjust="spacingAndGlyphs">The Ukrainian Presidency</text><text x="72.700" y="28.200" font-size="3.200" fill="#2b5fae" textLength="24.300" lengthAdjust="spacingAndGlyphs">of the EU Strategy</text><text x="72.700" y="32.200" font-size="3.200" fill="#2b5fae" textLength="30.100" lengthAdjust="spacingAndGlyphs">for the Danube Region</text><path d="M123.500 22.800C131 17.300 144 16 151.500 22c5 4 8 10 14.500 14-1.500-.2-2.600-.7-3.600-1.400.3.900.8 1.500 1.500 2.100C157 33 155 27 149.500 23 142.500 18.500 132 19.300 123.500 22.800z" fill="#2356a6"/><path d="M144.500 19.600c8.500-.8 17 2 21.500 8.200-5.500-4.500-13-6.600-20.500-6.500z" fill="#ecd040"/><circle cx="168.300" cy="28.600" r="3.600" fill="none" stroke="#ecd040" stroke-width=".55" stroke-dasharray=".8 .9"/><text x="118.900" y="28.800" font-size="4.300" font-weight="bold" fill="#1d4f9c" textLength="33.600" lengthAdjust="spacingAndGlyphs">DANUBE REGION</text><text x="133.300" y="32.900" font-size="4.300" font-weight="bold" fill="#cdb02a" textLength="19.600" lengthAdjust="spacingAndGlyphs">strategy</text><text x="246" y="28.200" font-size="4.250" font-weight="bold" fill="#1d7fa9" text-anchor="end" textLength="58.300" lengthAdjust="spacingAndGlyphs">Ministry for Communities and</text><text x="246" y="33.700" font-size="4.250" font-weight="bold" fill="#1d7fa9" text-anchor="end" textLength="68.800" lengthAdjust="spacingAndGlyphs">Territories Development of Ukraine</text><path d="M247.200 20.700h3.600l5.400 8.400-5.400 8.400h-3.600l4.400-8.400z" fill="#3a9bd8"/><path d="M251.800 20.700h3.200l5 8.400-5 8.400h-3.200l5-8.400z" fill="#f4d22e"/><g transform="translate(1.300 0)"><g fill="#4a78c2" opacity=".30"><ellipse cx="298.2" cy="17" rx="4" ry="5"/><ellipse cx="298.2" cy="21" rx="11" ry="6"/><ellipse cx="298.2" cy="28.5" rx="13" ry="6.5"/><ellipse cx="284" cy="28.5" rx="6.5" ry="4.2"/><ellipse cx="312.4" cy="28.5" rx="6.5" ry="4.2"/><ellipse cx="298.2" cy="34" rx="11" ry="3.5"/></g><path d="M300.0 20.9q1.3 -0.7 1.8 0.7M286.6 27.9q0.9 -0.6 1.9 -0.6M290.3 33.0q0.1 1.1 0.8 1.8M285.9 29.4q-0.8 0.2 -1.5 0.7M296.5 19.1q-0.3 -1.2 0.6 -2.1M314.6 30.7q0.8 1.5 -0.6 2.5M278.7 29.0q1.0 -0.9 0.2 -2.0M290.5 29.8q-0.9 -0.5 -1.7 -1.1M279.6 29.9q0.0 -1.6 -1.6 -2.1M289.2 21.4q-0.4 -0.5 -0.6 -1.1M293.8 34.5q0.7 0.5 1.6 0.9M294.9 20.7q0.2 -1.6 1.9 -1.7M302.3 18.1q0.9 -0.3 1.8 0.0M301.4 36.7q-0.1 -1.0 -0.7 -1.8M315.7 32.1q0.6 -1.0 1.6 -1.6M314.6 27.6q0.7 0.5 0.9 1.2M291.7 18.1q-0.4 -1.0 0.7 -1.3M283.3 25.7q0.8 1.3 1.9 0.3M314.1 29.8q0.6 0.9 -0.1 1.7M310.2 25.4q-0.4 -0.9 0.3 -1.6M312.2 31.0q0.5 0.9 0.3 1.9M289.0 18.0q-0.6 -1.1 -0.9 -2.4M303.8 35.3q0.8 -0.6 1.0 -1.6M305.4 35.6q0.2 -1.1 0.5 -2.2M284.7 32.3q-1.7 0.4 -1.2 2.0M294.0 21.8q0.8 -1.2 2.1 -0.7M292.1 25.8q-0.1 0.9 0.8 0.9M304.9 25.2q1.2 0.4 1.7 -0.7M287.3 26.8q0.7 0.9 -0.1 1.8M300.9 19.8q-0.9 -0.8 -2.0 -0.2M281.6 26.1q-0.5 0.8 0.0 1.6M306.8 23.2q-0.7 -1.2 -1.8 -0.4M307.1 34.7q0.8 -0.2 1.5 -0.6M296.0 13.0q-0.2 0.7 0.1 1.3M283.6 30.3q0.2 -0.9 -0.7 -1.2M291.6 16.3q0.7 1.5 -0.9 2.0M300.8 22.9q0.8 0.3 1.7 0.2M299.0 12.7q1.3 1.2 2.3 -0.2M295.2 35.6q-0.3 -1.0 0.7 -1.4M316.5 26.4q-0.9 -0.4 -0.4 -1.3M306.6 22.5q1.0 0.9 2.3 1.1M291.6 25.9q0.4 -1.0 1.4 -0.7M299.7 17.4q1.0 -0.1 1.1 0.9M290.1 31.5q0.5 1.1 -0.5 1.8M308.5 25.9q-0.6 1.2 0.7 1.7M312.8 30.1q-0.8 -0.5 -1.2 -1.3M280.0 31.0q0.7 0.7 -0.1 1.4M305.8 18.6q0.1 0.8 0.1 1.6M290.3 20.6q0.9 -0.0 1.7 0.0M298.6 16.4q-0.6 0.3 -1.2 -0.0M290.1 17.3q-0.5 -1.0 -1.7 -1.0M305.3 30.3q0.4 -0.9 1.3 -1.2M308.1 28.4q0.8 1.4 2.3 0.6M312.5 26.8q1.2 -0.3 1.7 -1.3M311.3 31.2q-1.0 -0.4 -1.9 -0.0M279.8 30.9q0.4 0.7 -0.0 1.3M298.2 21.3q-1.2 -0.5 -2.1 0.3M287.9 31.1q0.8 1.3 -0.7 1.9M305.9 29.7q-0.3 -0.7 -0.7 -1.4M296.7 33.1q0.8 -0.7 1.8 -0.4M286.1 26.7q-0.2 1.4 1.2 1.5M298.9 34.9q0.5 -0.9 -0.4 -1.5M296.4 19.2q0.8 0.4 1.1 1.3M307.7 35.3q0.0 0.9 -0.4 1.7M292.5 22.6q0.5 0.7 -0.2 1.3M288.4 24.8q-0.6 1.1 0.6 1.6M304.1 35.7q1.1 0.1 1.8 -0.7M279.1 30.8q-1.2 -0.0 -2.1 0.7M297.3 20.3q-1.6 0.7 -0.7 2.1M288.2 28.7q-0.1 1.0 -0.6 1.9M298.4 16.9q1.0 -0.9 2.2 -1.4M288.1 26.4q0.7 -0.9 1.7 -1.5M293.2 20.1q0.4 1.1 1.5 0.6M282.4 24.6q-1.4 -0.3 -1.7 -1.8M294.2 23.0q1.4 0.7 2.3 -0.7M307.5 35.2q-0.8 1.4 -2.0 0.3M293.8 36.0q1.8 -0.4 1.1 -2.1M283.6 25.1q0.1 -1.4 -1.0 -2.3M304.8 31.6q-0.7 1.3 -1.9 0.5M316.6 28.4q0.2 0.8 -0.5 1.3M304.4 29.9q0.5 0.4 1.0 0.8M302.1 21.5q1.4 0.8 0.3 2.0M290.0 23.4q1.3 0.7 2.0 -0.5M297.4 17.3q-0.6 1.3 0.0 2.5M295.1 17.9q-1.3 -0.7 -1.2 -2.2M285.5 32.5q-0.7 -0.9 -0.1 -1.9M286.5 31.5q-0.3 1.2 -0.7 2.4M293.9 16.7q0.6 -0.9 1.4 -0.2M305.6 21.2q-0.1 1.1 -1.2 1.2M292.1 36.8q1.5 0.3 1.8 1.8M292.3 33.2q-0.5 -1.2 0.8 -1.6M297.4 21.1q0.5 -0.6 1.3 -0.7M291.6 18.4q0.8 -0.8 2.0 -0.5M307.8 19.5q-0.5 0.5 -0.2 1.2M316.4 28.1q0.4 -0.6 1.2 -0.4M297.4 36.8q0.7 -0.7 1.7 -0.5M311.5 30.9q0.8 -0.9 1.0 -2.0M291.1 19.6q0.1 1.6 -1.5 1.8M285.5 31.3q0.7 0.6 0.0 1.3M300.8 19.8q1.4 1.3 2.4 -0.3M307.5 23.1q-0.2 0.9 0.2 1.8M306.0 31.2q-0.2 -1.4 1.2 -1.7M301.4 21.1q-0.5 -0.7 -0.1 -1.5M315.0 26.6q-1.3 0.3 -0.8 1.6M298.8 17.2q1.5 -0.5 0.8 -2.0M302.1 36.1q-0.7 1.0 -1.7 1.7M288.2 32.0q0.7 -0.1 1.3 -0.5M303.7 16.9q-0.1 0.9 -0.9 1.0M288.0 27.2q-1.1 -0.1 -0.9 -1.2M291.1 29.3q0.9 0.5 0.6 1.5M311.2 25.8q0.7 0.1 1.2 0.5M306.9 22.1q-1.0 0.6 -0.3 1.6M290.4 26.3q-1.2 0.2 -1.1 1.4M285.5 30.7q-0.4 0.7 0.3 1.2M295.2 33.1q-0.9 0.8 -2.0 1.4M303.8 21.0q-0.7 0.3 -1.4 -0.0M299.4 36.0q0.3 1.1 1.5 1.2M293.7 35.4q-1.5 -0.1 -1.7 -1.6M294.4 33.9q-0.1 -0.9 0.7 -1.3M287.6 30.6q0.6 -0.3 1.0 -0.8M304.0 19.3q-0.8 0.6 -1.8 1.0M305.3 23.1q-0.6 0.1 -1.1 0.5M298.0 17.4q-0.0 -1.2 0.2 -2.3M295.5 13.5q-0.5 1.3 -1.8 0.7M308.5 32.0q-0.6 -0.1 -1.3 -0.1M293.2 36.7q-0.3 1.8 1.6 1.8M308.5 33.0q0.5 1.2 0.9 2.4M284.1 32.3q0.5 -0.5 1.2 -0.5M298.6 35.8q0.2 0.8 0.4 1.5M317.3 29.4q0.9 -0.0 1.1 -0.9M281.9 25.3q0.0 -1.1 -1.1 -1.3M301.8 20.7q-0.6 -1.0 0.2 -1.8M303.5 22.7q-1.3 1.0 -2.4 -0.2M286.8 28.6q0.6 -0.1 1.2 0.2M286.6 26.8q-0.5 -0.6 -1.3 -0.8M297.4 14.6q0.5 -0.9 1.4 -0.6M281.1 28.2q0.6 -1.0 1.6 -1.7M304.7 26.2q-0.5 0.9 -1.2 1.7M317.3 30.8q1.4 1.2 0.0 2.5M299.9 22.0q-0.4 0.7 0.1 1.3M285.6 27.4q-1.0 -0.8 -2.1 -0.1M315.2 32.1q0.4 -0.7 -0.3 -1.2M291.4 31.2q0.2 -1.3 -0.8 -2.2M288.4 26.0q-1.1 0.4 -2.1 0.9M288.4 28.3q0.9 0.5 1.5 -0.3M287.2 31.1q0.9 -0.8 2.1 -0.8M297.2 33.7q-0.6 -1.1 -0.8 -2.3M308.2 26.4q-0.5 0.6 -0.5 1.4M306.8 28.1q-1.5 -0.7 -0.7 -2.1M302.4 20.8q1.5 -0.6 1.0 -2.1M304.3 33.3q-1.1 -0.1 -1.1 -1.2M281.2 31.4q0.4 0.7 0.5 1.6M289.2 30.3q-1.2 -0.0 -1.1 1.2M298.7 34.0q-0.5 -0.3 -0.9 -0.8M291.9 30.0q-0.6 -0.8 -1.5 -0.4M285.7 31.6q0.6 -0.1 1.2 -0.2M284.9 24.4q-0.1 1.4 -1.4 1.9M286.2 29.9q-0.7 -0.2 -1.4 0.0M307.0 32.2q-0.7 -0.5 -1.2 -1.2M294.0 35.0q1.8 -0.6 2.1 1.3M293.3 34.9q0.0 0.9 0.2 1.8M309.4 31.3q-0.8 -0.5 -1.0 -1.3M305.5 31.0q-0.1 1.1 0.9 1.6M296.9 34.9q0.4 0.7 0.1 1.5M307.2 33.8q0.8 0.3 0.8 1.2M291.0 25.1q1.0 0.4 0.9 1.4M308.5 22.7q1.3 0.7 0.7 2.0M311.0 29.7q-1.0 0.1 -2.1 -0.0M283.1 27.3q-1.5 -0.3 -1.8 1.3M286.8 30.5q1.2 -0.4 1.7 -1.6M313.7 29.3q-0.9 -0.5 -1.2 -1.4M307.7 28.0q0.1 0.9 -0.0 1.8M303.7 22.1q-1.4 -0.7 -1.1 -2.2M305.1 32.0q-1.4 -0.2 -1.4 1.2M283.9 32.1q0.6 -1.2 1.8 -0.7M307.8 24.8q-0.7 -0.9 -1.5 -1.8M294.6 36.6q0.5 1.0 0.5 2.1M295.0 22.4q-0.7 -0.6 -0.5 -1.6M286.7 31.0q0.7 -1.0 1.8 -0.7M304.3 23.7q-0.4 -1.1 -1.4 -0.6M292.2 28.2q0.4 -1.1 1.0 -2.1M289.7 25.8q1.1 0.5 1.7 1.7M293.2 17.8q-0.3 1.1 -1.3 0.7M308.0 18.6q0.1 0.8 0.1 1.6M305.3 20.8q0.5 -1.7 2.2 -1.0M312.7 28.1q0.5 0.7 1.2 0.1M305.2 17.8q0.8 0.1 1.1 0.8M315.3 27.4q1.2 -0.9 0.4 -2.1M285.5 29.7q-1.1 -0.1 -2.2 -0.4M315.0 26.0q0.6 0.8 -0.1 1.5M298.2 12.6q-0.7 0.2 -1.4 0.3M295.0 36.9q0.8 0.8 1.9 1.0M278.2 27.5q-1.0 -0.9 -1.0 -2.3M297.8 35.2q1.0 0.6 2.2 0.5M291.6 34.3q-0.7 0.7 -1.2 1.4M295.7 22.4q-1.3 0.2 -2.2 -0.8M298.7 18.3q-1.3 -0.5 -2.6 -0.1M290.6 19.1q-0.5 -1.1 -1.8 -1.1M278.7 30.5q0.0 -1.4 1.5 -1.3M286.1 29.0q-0.8 1.3 -2.2 0.6M305.2 21.0q0.7 -1.0 1.0 -2.1M288.1 19.2q-0.7 0.5 -1.5 0.8M304.6 36.2q1.3 -0.7 1.9 0.7M301.7 35.8q-0.5 0.4 -1.2 0.4M302.5 36.3q0.9 -0.3 1.9 -0.2M281.4 28.4q1.0 0.5 0.3 1.4M307.7 34.1q0.1 -0.7 -0.2 -1.3M307.5 23.4q1.1 0.5 1.4 -0.6M277.6 28.6q-0.0 -0.7 0.5 -1.2M301.7 22.8q0.1 -0.9 -0.6 -1.3M304.1 22.3q-1.7 -0.2 -1.7 1.5M310.7 26.3q-0.9 0.4 -0.3 1.2M307.2 33.3q-1.5 0.3 -1.0 1.8M312.7 27.2q-1.1 0.5 -0.6 1.7M302.9 35.2q-0.6 -1.1 0.6 -1.5M288.3 22.4q-0.4 -1.5 -2.0 -1.2M301.6 18.4q1.1 -0.6 1.4 -1.9M280.7 25.9q0.6 -0.6 0.4 -1.4M297.0 16.6q-0.8 1.1 -0.1 2.3M296.8 13.4q-0.3 -1.3 0.8 -2.1M301.9 35.2q0.7 -0.7 1.4 -1.3M302.3 16.1q-0.1 0.8 0.5 1.4M281.6 28.1q0.3 -0.7 0.3 -1.4M291.8 25.0q0.5 0.8 1.2 0.2M301.4 18.1q1.1 -0.7 0.3 -1.8M279.2 26.0q1.4 0.0 1.3 -1.3M302.7 21.7q1.4 0.3 1.9 1.7M318.1 29.1q-0.3 1.2 -1.4 1.1M288.0 20.5q1.6 0.1 2.0 -1.4M307.5 28.5q0.6 -0.6 1.3 -0.1" fill="none" stroke="#3a68b6" stroke-width=".62" stroke-linecap="round" opacity=".72"/><path d="M281 36.300c1.500-1.200 3-.8 4 .6 2.500 3 7 3.600 13.200 3.600s10.700-.6 13.200-3.600c1-1.400 2.500-1.800 4-.6-.6 1.800-.4 3.600.8 5.300-2-.3-3.400-1.400-4.300-3-3 2.600-7.500 3.400-13.700 3.400s-10.700-.8-13.700-3.400c-.9 1.600-2.300 2.700-4.300 3 1.200-1.700 1.400-3.500.8-5.300z" fill="#3a68b6" opacity=".55"/><path d="M289 40.500c3 2.200 15.400 2.200 18.400 0" fill="none" stroke="#3a68b6" stroke-width=".9" stroke-dasharray="1.100 .7" opacity=".55"/><path d="M292.300 23.800h11.800v7.400l-5.900 2.600-5.900-2.600z" fill="#fff" opacity=".82"/><text x="298.200" y="32" font-size="11.800" font-weight="bold" fill="#2451a2" stroke="#2451a2" stroke-width=".45" text-anchor="middle" font-family="Liberation Serif, serif" textLength="10.600" lengthAdjust="spacingAndGlyphs">NM</text></g><clipPath id="hssb"><path d="M333.600 28.600L339 18.400l5.400 10.200L339 38.800z"/></clipPath><g clip-path="url(#hssb)" stroke="#1f93da" stroke-width="1.100"><path d="M326.00 16l12 22.700"/><path d="M327.75 16l12 22.700"/><path d="M329.50 16l12 22.700"/><path d="M331.25 16l12 22.700"/><path d="M333.00 16l12 22.700"/><path d="M334.75 16l12 22.700"/><path d="M336.50 16l12 22.700"/><path d="M338.25 16l12 22.700"/><path d="M340.00 16l12 22.700"/><path d="M341.75 16l12 22.700"/><path d="M343.50 16l12 22.700"/><path d="M345.25 16l12 22.700"/></g><g font-family="Liberation Serif, serif" font-weight="bold" font-size="7.300" fill="#161616"><text x="347.200" y="23.900" textLength="20.400" lengthAdjust="spacingAndGlyphs">Hanns</text><text x="347.200" y="31.500" textLength="19.800" lengthAdjust="spacingAndGlyphs">Seidel</text><text x="347.200" y="39.100" textLength="25.400" lengthAdjust="spacingAndGlyphs">Stiftung</text></g><g fill="none" stroke-width="2.300"><g stroke="#f7d531"><circle cx="211.5" cy="379.5" r="113"/><circle cx="211.5" cy="379.5" r="94.500"/><circle cx="211.5" cy="379.5" r="44"/><circle cx="211.5" cy="379.5" r="24"/><path d="M211.5 244V478M80 379.5H364"/><rect x="53" y="366" width="27" height="27"/><circle cx="102.500" cy="271" r="5"/><path d="M170 371.5v16M253 371.5v16M203.5 338h16M203.5 421h16M118 482h28"/></g><g stroke="#2457a7"><circle cx="125.500" cy="293.600" r="16"/><path d="M140.500 308.500l46.500 46.500"/><path d="M190.500 244h62.500M260 244h8.500M221 253h47.500"/><path d="M324.3 273.2A155 155 0 0 1 365.0 401.1L347.2 398.6A137 137 0 0 0 311.2 285.5Z"/><path d="M361.6 403.3A152 152 0 0 1 346.9 448.5L332.7 441.2A136 136 0 0 0 345.8 400.8Z"/><path d="M113.8 488.0A146 146 0 0 1 70.5 417.3L87.9 412.6A128 128 0 0 0 125.9 474.6Z"/><path d="M256 420l34 34a8.500 8.500 0 0 0 12-12l-34-34z"/><path d="M118 476h18"/><circle cx="211.5" cy="379.5" r="7"/></g><circle cx="211.5" cy="379.5" r="3" fill="#2457a7" stroke="none"/></g></svg>
<div id="ttl">ПОЛОЖЕННЯ</div>
<div style="position:absolute;left:76px;top:136.700px;width:268px;height:1.400px;background:#f3d43a"></div>
<div class="sub" style="top:151.700px">про проведення Транснаціонального Хакатону зі</div>
<div class="sub" style="top:171.100px">сталого розвитку Дунайського регіону для студентів</div>
<div class="sub" style="top:190.400px">та молоді</div>
</div></div>
<div id="pdfscroll"><div class="arr up" style="left:3px;top:4.500px;border-bottom-color:#a3a3a3"></div><div class="th"></div></div>
</div>
<div id="totop"><svg style="left:14.500px;top:12px;width:7px;height:13px" viewBox="0 0 7 13"><path d="M3.500 1v12M.6 3.900L3.500 1l2.900 2.900" stroke="#fff" stroke-width="1.100" fill="none"/></svg></div>
</div>
<div id="vscroll"><div class="arr up" style="left:3.200px;top:5px"></div><div class="th"></div><div class="arr dn" style="left:3.200px;top:449.500px"></div></div>

<!-- TASKBAR -->
<div id="taskbar"><div id="tbin">
<svg style="left:11.500px;top:7.300px;width:12px;height:12px" viewBox="0 0 23 23"><path d="M0 3.200l9.400-1.300v9H0zM10.600 1.700L23 0v10.900H10.600zM0 12.100h9.400v9L0 19.800zM10.600 12.100H23V23l-12.400-1.700z" fill="#1f1f1f"/></svg>
<div id="search">
<svg style="left:8px;top:7px;width:12px;height:12px" viewBox="0 0 24 24"><circle cx="15.500" cy="8.500" r="7" fill="none" stroke="#1c1c1c" stroke-width="2"/><path d="M10.500 13.500L1.500 22.500" stroke="#1c1c1c" stroke-width="2.200"/></svg>
<span>Введіть пошуковий запит тут</span>
</div>
<!-- task view -->
<svg style="left:298px;top:8px;width:12px;height:11px" viewBox="0 0 24 22"><rect x="3.200" y="4.800" width="12.600" height="12.400" fill="none" stroke="#151515" stroke-width="2.200"/><path d="M.5 1.600h18.500M.5 20.400h18.500" stroke="#151515" stroke-width="2.400"/><path d="M22.200 .6v3M22.200 6.500v15" stroke="#151515" stroke-width="2.400"/></svg>
<!-- edge -->
<svg style="left:332.700px;top:4.300px;width:18px;height:18px" viewBox="0 0 36 36"><defs><linearGradient id="eg1" x1="0" y1="0" x2="0" y2="1"><stop offset="0" stop-color="#2aa9e6"/><stop offset="1" stop-color="#0b4f9c"/></linearGradient><linearGradient id="eg2" x1="0" y1="0" x2="1" y2="0"><stop offset="0" stop-color="#37bfe9"/><stop offset=".55" stop-color="#3cc98a"/><stop offset="1" stop-color="#63d64f"/></linearGradient></defs><path d="M18 1C8 1 1 9 1 18.500 1 28 8.500 35 18 35c5 0 9.500-2 12.500-5.500-3 1.500-7 1.500-10-.5-3.500-2.300-5-6.500-3.500-10 1-2.300 3-3.500 5-3.500 1.500 0 2.500.5 3 1.500C24 9 21 1 18 1z" fill="url(#eg1)"/><path d="M1.200 16C2.500 7 9.500 1 18 1c9.500 0 17 7 17 14.500 0 5-4 8.500-8.500 8.500-3.500 0-5.500-1.500-5-3s1.800-2.500 1.800-4.500c0-3.500-3.500-6-7.800-6-6.500 0-12 3-14.300 5.500z" fill="url(#eg2)"/><path d="M11 28c-3.500-4.500-2.500-11 3-14-2.500 3-2 8.500 2 12 4 3.500 10 3.500 14.500 0C27.500 32 21 36 14.500 34c-1.500-1-2.500-3-3.500-6z" fill="#0a4a93"/></svg>
<!-- store -->
<svg style="left:368.800px;top:5px;width:17.200px;height:17px" viewBox="0 0 34 34"><path d="M11 8V5a3 3 0 0 1 3-3h6a3 3 0 0 1 3 3v3" fill="none" stroke="#4aa3e4" stroke-width="2.600"/><path d="M1 8h32v20a4 4 0 0 1-4 4H5a4 4 0 0 1-4-4z" fill="#17498d"/><rect x="10" y="12.500" width="6.300" height="6.300" fill="#f25022"/><rect x="17.700" y="12.500" width="6.300" height="6.300" fill="#7fba00"/><rect x="10" y="20.200" width="6.300" height="6.300" fill="#00a4ef"/><rect x="17.700" y="20.200" width="6.300" height="6.300" fill="#ffb900"/></svg>
<!-- mail -->
<svg style="left:404.800px;top:4.200px;width:18px;height:16.500px" viewBox="0 0 36 32"><path d="M1 12L18 1l17 11v18H1z" fill="#1565c0"/><path d="M4 10h28v14H4z" fill="#fff"/><path d="M1 12l17 11 17-11v18a1.500 1.500 0 0 1-1.500 1.500h-31A1.500 1.500 0 0 1 1 30z" fill="#29b0f2"/><path d="M1 30.500L18 20l17 10.500z" fill="#1e8fe0"/></svg>
<!-- explorer -->
<svg style="left:440.500px;top:6px;width:18px;height:15px" viewBox="0 0 36 30"><path d="M1 3a2 2 0 0 1 2-2h9l3 3h18a2 2 0 0 1 2 2v4H1z" fill="#e8a92a"/><path d="M1 8h34v18a2 2 0 0 1-2 2H3a2 2 0 0 1-2-2z" fill="#fcd354"/><path d="M9 17h18v11H9z" fill="#3b8ede"/><path d="M13 22h10v6H13z" fill="#fcd354"/></svg>
<!-- chrome -->
<div style="position:absolute;left:468px;top:-1px;width:35px;height:29px;background:#e3eff6"></div>
<svg style="left:476.800px;top:4.500px;width:17.200px;height:17.200px" viewBox="0 0 34 34"><circle cx="17" cy="17" r="16" fill="#fff"/><path d="M17 1A16 16 0 0 1 30.860 9H17a8 8 0 0 0-6.930 4L3.140 9A16 16 0 0 1 17 1z" fill="#ea4335"/><path d="M30.860 9A16 16 0 0 1 17 33l6.930-12A8 8 0 0 0 23.930 13L17 9z" fill="#fbbc04"/><path d="M17 33A16 16 0 0 1 3.140 9l6.930 12a8 8 0 0 0 13.860 0z" fill="#34a853"/><circle cx="17" cy="17" r="7.300" fill="#fff"/><circle cx="17" cy="17" r="5.800" fill="#4285f4"/></svg>
<!-- word -->
<svg style="left:512px;top:4.300px;width:18px;height:17px" viewBox="0 0 36 34"><rect x="10" y="1" width="25" height="32" rx="2" fill="#41a5ee"/><rect x="10" y="9" width="25" height="8" fill="#2b7cd3"/><rect x="10" y="17" width="25" height="8" fill="#185abd"/><path d="M10 25h25v6a2 2 0 0 1-2 2H12a2 2 0 0 1-2-2z" fill="#103f91"/><rect x="1" y="8" width="18" height="18" rx="1.800" fill="#185abd"/><path d="M4.500 12l2.300 10 3.200-8.500 3.200 8.500 2.300-10" fill="none" stroke="#fff" stroke-width="2"/></svg>
<!-- running indicators -->
<div style="position:absolute;left:327px;top:26px;width:29px;height:2px;background:#3d86d8"></div>
<div style="position:absolute;left:435.500px;top:26px;width:28px;height:2px;background:#3d86d8"></div>
<div style="position:absolute;left:468px;top:26px;width:35px;height:2px;background:#3d86d8"></div>
<div style="position:absolute;left:507px;top:26px;width:26.500px;height:2px;background:#3d86d8"></div>
<!-- weather -->
<svg style="left:696.800px;top:5.800px;width:16px;height:12px" viewBox="0 0 32 24"><defs><linearGradient id="wcl" x1="0" y1="0" x2="1" y2="1"><stop offset="0" stop-color="#f2f9fe"/><stop offset="1" stop-color="#8ec6f0"/></linearGradient></defs><path d="M14 21a6 6 0 0 1-1-11.900A8 8 0 0 1 28.500 9.500a5.800 5.800 0 0 1-.5 11.500z" fill="#5aa5e6"/><path d="M7.500 22.500a6.500 6.500 0 0 1-1-12.900A9 9 0 0 1 23.500 10a6.300 6.300 0 0 1 0 12.500z" fill="url(#wcl)" stroke="#b5d9f5" stroke-width="1"/></svg>
<div class="tray" style="left:720px;top:7.500px;font-size:10.400px;line-height:13px;letter-spacing:-.35px">2°C</div>
<div class="tray" style="left:741.600px;top:7.500px;font-size:10.400px;line-height:13px;letter-spacing:-.05px">Cloudy</div>
<svg style="left:784.500px;top:9.800px;width:9px;height:5.500px" viewBox="0 0 9 5.500"><path d="M.5 5L4.500.8l4 4.200" fill="none" stroke="#151515" stroke-width="1.250"/></svg>
<!-- meet now -->
<svg style="left:802.500px;top:6.200px;width:10px;height:13px" viewBox="0 0 20 26"><rect x="2.500" y="7.500" width="11" height="11" rx="2.500" fill="none" stroke="#151515" stroke-width="2"/><path d="M13.500 11.500l4-2.500v8l-4-2.500" fill="none" stroke="#151515" stroke-width="1.800"/><path d="M3.500 3.500a7.500 7.500 0 0 1 9 0M3.500 22.500a7.500 7.500 0 0 0 9 0" fill="none" stroke="#151515" stroke-width="1.700"/></svg>
<!-- onedrive error -->
<svg style="left:818.500px;top:7.800px;width:14.500px;height:12px" viewBox="0 0 30 24"><path d="M8 16.500a5.200 5.200 0 0 1-.5-10.400A8 8 0 0 1 22.500 7a5 5 0 0 1 1.500 9.500z" fill="#6a6a6a" stroke="#1c1c1c" stroke-width="1.800"/><circle cx="21.500" cy="16.500" r="6.500" fill="#e81123"/><path d="M18.800 13.800l5.400 5.400M24.200 13.800l-5.400 5.400" stroke="#fff" stroke-width="1.700"/></svg>
<!-- battery -->
<svg style="left:836.500px;top:8.300px;width:13px;height:9px" viewBox="0 0 26 18"><path d="M3 4V1M6.500 4V1M1.500 4h7v2.500a3.500 3.500 0 0 1-7 0z" fill="#151515" stroke="#151515" stroke-width="1.300"/><path d="M5 10v6.500" stroke="#151515" stroke-width="1.600"/><path d="M9 4.800h14.500v11.400H5" fill="none" stroke="#151515" stroke-width="1.700"/><rect x="24" y="8" width="2" height="5" fill="#151515"/><rect x="10" y="7.500" width="8" height="6" fill="#151515"/></svg>
<!-- wifi -->
<svg style="left:855.500px;top:8.200px;width:10.500px;height:10.500px" viewBox="0 0 22 22"><g fill="none" stroke-width="2.100" stroke="#1c1c1c"><path d="M2 21A19 19 0 0 1 21 2" stroke="#555"/><path d="M7.500 21A13.500 13.500 0 0 1 21 7.500"/><path d="M13 21a8 8 0 0 1 8-8"/></g><path d="M17 21.500a4 4 0 0 1 4-4v4z" fill="#151515"/></svg>
<!-- speaker muted -->
<svg style="left:871.500px;top:8px;width:12.500px;height:10.500px" viewBox="0 0 26 22"><path d="M1.500 7.500h4l6-5.500v18l-6-5.500h-4z" fill="none" stroke="#151515" stroke-width="2" stroke-linejoin="round"/><path d="M16 7.500l7 7M23 7.500l-7 7" stroke="#151515" stroke-width="2"/></svg>
<div class="tray" style="left:892.300px;top:7.300px;font-size:8.400px;letter-spacing:-.1px;color:#111">УКР</div>
<div class="tray" style="left:917px;top:.7px;width:40px;text-align:center;font-size:9.300px;letter-spacing:-.45px">15:17</div>
<div class="tray" style="left:912px;top:14px;width:50px;text-align:center;font-size:9.300px;letter-spacing:-.55px">01.03.2022</div>
<!-- notification -->
<svg style="left:970px;top:7.200px;width:12.200px;height:12.200px" viewBox="0 0 24 24"><path d="M1.500 1.500h21v15.500H15.500l-3.500 4-3.500-4H1.500z" fill="none" stroke="#151515" stroke-width="2" stroke-linejoin="round"/></svg>
<div style="position:absolute;left:996px;top:-1px;width:1px;height:29px;background:#b4bfcc"></div>
</div></div>

</body>
</html>
